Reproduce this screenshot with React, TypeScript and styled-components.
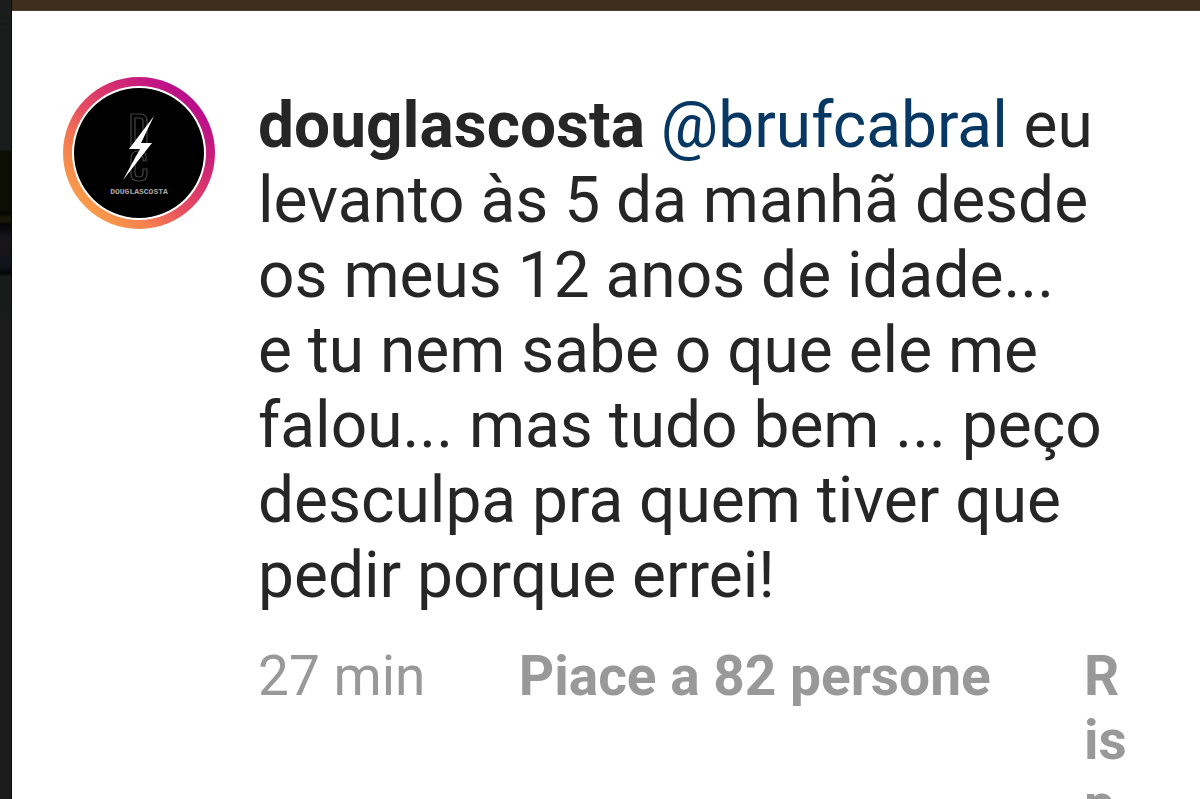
import React from "react";
import styled, { createGlobalStyle } from "styled-components";

const GlobalStyle = createGlobalStyle`
  * { box-sizing: border-box; }
  html { scrollbar-width: none; }
  body {
    margin: 0;
    background: #fff;
    color: #262626;
    font-family: Roboto, "Liberation Sans", sans-serif;
  }
`;

const Page = styled.div`
  display: grid;
  grid-template-columns: 12px minmax(0, 1fr);
  height: 100vh;
  overflow: hidden;
`;

const Backdrop = styled.div`
  border-right: 1px solid #0a0a0a;
  background: linear-gradient(
    #1b1c1c 0 23px,
    #141616 24px,
    #1a1d1c 25px 150px,
    #0c0e04 151px 211px,
    #040500 213px,
    #171808 218px 221px,
    #050506 224px,
    #15151c 238px,
    #191519 248px,
    #11131c 266px,
    #040506 273px,
    #171b1a 277px 300px,
    #1c1c1c 325px
  );
`;

const Panel = styled.div`
  display: flex;
  flex-direction: column;
  min-height: 0;
`;

const TopBar = styled.div`
  flex: none;
  height: 11px;
  background: #3f2e1b;
  border-bottom: 1px solid #4c4038;
`;

const Comment = styled.article`
  flex: 1;
  min-height: 0;
  overflow-y: auto;
  scrollbar-width: none;
  display: grid;
  grid-template-columns: 154px minmax(0, 1fr);
  column-gap: 42px;
  align-items: start;
  padding: 64px 68px 0 50px;
`;

const AvatarLink = styled.a`
  display: block;

  svg {
    display: block;
    width: 100%;
  }
`;

const Text = styled.p`
  margin: 0;
  padding: 13px 16px 0 0;
  font-size: 64px;
  line-height: 75px;
`;

const Username = styled.a`
  color: inherit;
  font-weight: 700;
  text-decoration: none;
`;

const Mention = styled.a`
  color: #073763;
  text-decoration: none;
`;

const Meta = styled.div`
  display: flex;
  align-items: flex-start;
  justify-content: space-between;
  margin-top: 31px;
  color: #999;
  font-size: 55px;
  line-height: 64px;
`;

const Action = styled.button<{ $narrow?: boolean }>`
  flex: none;
  width: ${({ $narrow }) => ($narrow ? "48px" : "auto")};
  padding: 0;
  border: 0;
  background: none;
  color: inherit;
  font: inherit;
  font-weight: 700;
  text-align: left;
  word-break: break-all;
`;

function Avatar() {
  return (
    <svg viewBox="0 0 154 154" aria-hidden="true">
      <defs>
        <linearGradient id="ring" x1="0.15" y1="0.85" x2="0.85" y2="0.15">
          <stop offset="0" stopColor="#f99b4a" />
          <stop offset="0.2" stopColor="#f5804f" />
          <stop offset="0.45" stopColor="#e64c61" />
          <stop offset="0.7" stopColor="#d42c70" />
          <stop offset="1" stopColor="#b90c8c" />
        </linearGradient>
      </defs>
      <circle cx="77" cy="78" r="76" fill="url(#ring)" />
      <circle cx="77" cy="78" r="67" fill="#fff" />
      <circle cx="77" cy="78" r="65" fill="#000" />
      <g fill="none" stroke="#444" strokeWidth="1.200">
        <path d="M69 39h9q7 0 7 7v20q0 7-7 7h-9z" />
        <path d="M73 43h5q3 0 3 3v16q0 3-3 3h-5z" />
        <path d="M84 86v-5q0-5-6-5h-2q-7 0-7 7v16q0 7 7 7h2q7 0 7-7v-5h-4v4q0 4-4 4t-4-4V84q0-4 4-4t4 4v2z" />
      </g>
      <path d="M92 41 67 74h11L61 105l29-37H79z" fill="#fff" />
      <text
        x="77"
        y="119"
        fill="#aaa"
        fontFamily="Liberation Mono, monospace"
        fontSize="8"
        fontWeight="700"
        textAnchor="middle"
      >
        DOUGLASCOSTA
      </text>
    </svg>
  );
}

export default function App() {
  return (
    <>
      <GlobalStyle />
      <Page>
        <Backdrop />
        <Panel>
          <TopBar />
          <Comment>
            <AvatarLink href="#douglascosta" aria-label="douglascosta">
              <Avatar />
            </AvatarLink>
            <div>
              <Text>
                <Username href="#douglascosta">douglascosta</Username>{" "}
                <Mention href="#brufcabral">@brufcabral</Mention> eu levanto às
                5 da manhã desde os meus 12 anos de idade...
                <br />e tu nem sabe o que ele me falou... mas tudo bem ... peço
                desculpa pra quem tiver que pedir porque errei!
              </Text>
              <Meta>
                <time>27 min</time>
                <Action type="button">Piace a 82 persone</Action>
                <Action type="button" $narrow>
                  Rispondi
                </Action>
              </Meta>
            </div>
          </Comment>
        </Panel>
      </Page>
    </>
  );
}
